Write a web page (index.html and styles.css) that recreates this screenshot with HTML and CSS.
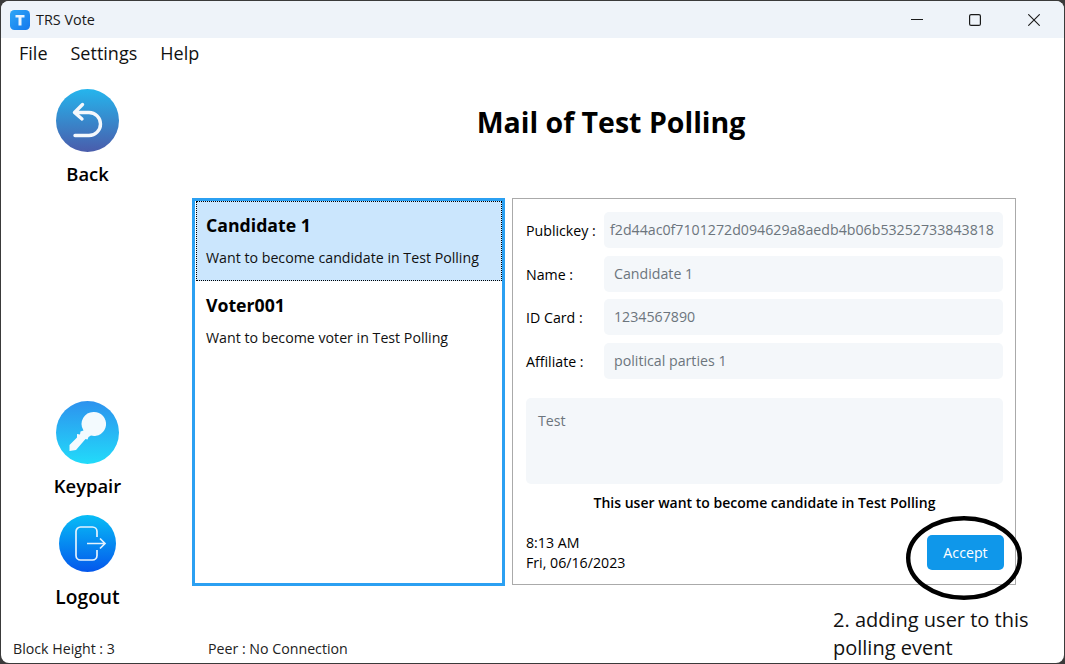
FILE: index.html
```html
<!DOCTYPE html>
<html lang="en">
<head>
<meta charset="utf-8">
<title>TRS Vote</title>
<link rel="stylesheet" href="styles.css">
</head>
<body>
<div class="window">
  <header class="titlebar">
    <div class="app">
      <svg class="app-icon" width="20" height="20" viewBox="0 0 20 20"><defs><linearGradient id="ai" x1="0" y1="0" x2="1" y2="1"><stop offset="0" stop-color="#2ea6f6"/><stop offset="1" stop-color="#1478ee"/></linearGradient></defs><rect width="20" height="20" rx="4.500" fill="url(#ai)"/><path d="M5.500 5h9v2.600h-3V15.500H8.500V7.600h-3z" fill="#eaf4ff"/></svg>
      <span class="app-name">TRS Vote</span>
    </div>
    <div class="controls">
      <svg class="ctl" width="12" height="12" viewBox="0 0 12 12"><path d="M0 5.500h12" stroke="#1a1a1a" stroke-width="1.100" fill="none"/></svg>
      <svg class="ctl" width="12" height="12" viewBox="0 0 12 12"><rect x="0.600" y="0.600" width="10.800" height="10.800" rx="1.500" stroke="#1a1a1a" stroke-width="1.200" fill="none"/></svg>
      <svg class="ctl close" width="12" height="12" viewBox="0 0 12 12"><path d="M0.300 0.300l11.400 11.400M11.700 0.300L0.300 11.700" stroke="#1a1a1a" stroke-width="1.100" fill="none"/></svg>
    </div>
  </header>
  <nav class="menubar">
    <span>File</span>
    <span>Settings</span>
    <span>Help</span>
  </nav>
  <div class="body">
    <aside class="sidebar">
      <div class="side-item back">
        <svg width="63" height="63" viewBox="0 0 63 63"><defs><linearGradient id="bk" x1="0" y1="0" x2="0" y2="1"><stop offset="0" stop-color="#25b5ed"/><stop offset="1" stop-color="#4a5cab"/></linearGradient></defs><circle cx="31.500" cy="31.500" r="31.500" fill="url(#bk)"/><path d="M18.500 23.500H33a11.500 11.500 0 0 1 0 23H19M26.500 15.500l-8 8 7.500 6.500" stroke="#f4f8fc" stroke-width="3.400" stroke-linecap="round" stroke-linejoin="round" fill="none"/></svg>
        <span class="side-label">Back</span>
      </div>
      <div class="side-item keypair">
        <svg width="63" height="63" viewBox="0 0 63 63"><defs><linearGradient id="ky" x1="0" y1="0" x2="0" y2="1"><stop offset="0" stop-color="#2d92ee"/><stop offset="1" stop-color="#22dbfa"/></linearGradient></defs><circle cx="31.500" cy="31.500" r="31.500" fill="url(#ky)"/><path d="M38 11A12 12 0 1 1 35 34.600L32.500 36L31.500 38.500L29.500 38L20 49L13.500 50L13.500 44L21 36.500L21 33L24 33.500L24.500 30.500L27.500 29.500A12 12 0 0 1 38 11z" fill="#f3fafe"/></svg>
        <span class="side-label">Keypair</span>
      </div>
      <div class="side-item logout">
        <svg width="57" height="57" viewBox="0 0 57 57"><defs><linearGradient id="lg" x1="0" y1="0" x2="0" y2="1"><stop offset="0" stop-color="#08bdf6"/><stop offset="1" stop-color="#0457ec"/></linearGradient></defs><circle cx="28.500" cy="28.500" r="28.500" fill="url(#lg)"/><path d="M38 22v-5.500a4.500 4.500 0 0 0-4.500-4.500H21.500a4.500 4.500 0 0 0-4.500 4.500v24a4.500 4.500 0 0 0 4.500 4.500h12a4.500 4.500 0 0 0 4.500-4.500V35" stroke="#e4f2fe" stroke-width="1.700" fill="none"/><path d="M28 28.500h18M41 23.500l5 5-5 5" stroke="#e4f2fe" stroke-width="1.700" fill="none"/></svg>
        <span class="side-label">Logout</span>
      </div>
    </aside>
    <main class="content">
      <h1 class="heading">Mail of Test Polling</h1>
      <div class="panels">
        <section class="list">
          <article class="mail selected">
            <h2 class="mail-name">Candidate 1</h2>
            <p class="mail-text">Want to become candidate in Test Polling</p>
          </article>
          <article class="mail">
            <h2 class="mail-name">Voter001</h2>
            <p class="mail-text">Want to become voter in Test Polling</p>
          </article>
        </section>
        <section class="detail">
          <div class="field"><label>Publickey :</label><div class="input key">f2d44ac0f7101272d094629a8aedb4b06b53252733843818</div></div>
          <div class="field"><label>Name :</label><div class="input">Candidate 1</div></div>
          <div class="field"><label>ID Card :</label><div class="input">1234567890</div></div>
          <div class="field"><label>Affiliate :</label><div class="input">political parties 1</div></div>
          <div class="note">Test</div>
          <p class="summary">This user want to become candidate in Test Polling</p>
          <div class="detail-foot">
            <div class="stamp"><div>8:13 AM</div><div>Fri, 06/16/2023</div></div>
            <button class="accept">Accept</button>
          </div>
        </section>
      </div>
    </main>
  </div>
  <footer class="status">
    <span class="block">Block Height : 3</span>
    <span>Peer : No Connection</span>
  </footer>
  <svg class="ring" width="120" height="88" viewBox="0 0 120 88"><ellipse cx="60" cy="44" rx="55.800" ry="39.800" stroke="#000" stroke-width="4.400" fill="none"/></svg>
  <div class="annotation">2. adding user to this<br>polling event</div>
</div>
</body>
</html>
```
FILE: styles.css
```css
* { box-sizing: border-box; }
html, body { margin: 0; height: 100%; }
body {
  background: #3a3a3a;
  padding: 1px;
  overflow: hidden;
  font-family: "Open Sans", "Noto Sans", sans-serif;
  color: #000;
}
.window {
  position: relative;
  width: 1063px;
  height: 662px;
  background: #fff;
  border-radius: 8px;
  overflow: hidden;
  display: flex;
  flex-direction: column;
}
.titlebar {
  flex: none;
  height: 37px;
  background: #eef3f9;
  display: flex;
  align-items: center;
  justify-content: space-between;
  padding-left: 9px;
}
.app { display: flex; align-items: center; gap: 6px; }
.app-name { font-size: 14.400px; color: #1a1a1a; padding-bottom: 1px; }
.controls { display: flex; align-items: center; gap: 46px; padding-right: 24px; }
.close { margin-left: 1px; }
.menubar {
  flex: none;
  height: 34px;
  display: flex;
  gap: 23px;
  align-items: center;
  padding: 0 0 4px 18px;
  font-size: 18px;
  color: #111;
}
.body { flex: 1; display: flex; min-height: 0; }
.sidebar {
  flex: none;
  width: 173px;
  display: flex;
  flex-direction: column;
  align-items: center;
  padding-top: 17px;
}
.side-item { display: flex; flex-direction: column; align-items: center; }
.side-label { font-size: 18.400px; font-weight: 600; line-height: 24px; margin-top: 10px; }
.keypair { margin-top: auto; }
.logout { margin-top: 17px; margin-bottom: 26px; }
.logout .side-label { margin-top: 13px; font-size: 19.200px; }
.content { flex: 1; padding: 29px 49px 0 18px; display: flex; flex-direction: column; }
.heading {
  margin: 0 0 55px;
  padding-left: 14px;
  text-align: center;
  font-size: 28.500px;
  line-height: 42px;
  font-weight: 700;
}
.panels { flex: 1; display: flex; gap: 7px; min-height: 0; }
.list {
  flex: none;
  width: 313px;
  height: 388px;
  border: 3px solid #2ba0f2;
}
.mail { height: 80px; padding: 12px 9px 0 11px; }
.mail.selected {
  background: #cbe6fd;
  outline: 1px dotted #000;
  outline-offset: -1px;
  margin-left: 1px;
  padding-left: 10px;
}
.mail-name { margin: 0; font-size: 17.700px; line-height: 24px; font-weight: 700; }
.mail-text { margin: 11px 0 0; font-size: 14.200px; line-height: 20px; white-space: nowrap; color: #111; }
.detail {
  flex: none;
  width: 504px;
  height: 387px;
  border: 1px solid #aaa;
  padding: 13px 12px 0 13px;
  font-size: 14.200px;
}
.field { display: flex; align-items: center; height: 36px; margin-bottom: 8px; }
.field:nth-child(2), .field:nth-child(4) { margin-bottom: 7px; }
.field label { flex: none; width: 78px; }
.input {
  flex: 1;
  height: 36px;
  line-height: 36px;
  background: #f4f7fa;
  border-radius: 5px;
  padding-left: 10px;
  color: #6c757d;
  white-space: nowrap;
  overflow: hidden;
}
.input.key { padding-left: 6px; }
.note {
  margin-top: 19px;
  height: 86px;
  background: #f4f7fa;
  border-radius: 5px;
  padding: 13px 12px;
  color: #6c757d;
}
.summary { margin: 9px 0 0; text-align: center; font-weight: 600; font-size: 14px; line-height: 20px; }
.detail-foot { margin-top: 20px; display: flex; justify-content: space-between; align-items: center; }
.stamp { line-height: 20px; }
.accept {
  width: 77px;
  height: 35px;
  margin: -2px -1px 0 0;
  padding: 1px 0 0;
  border: 0;
  background: #0f97ea;
  color: #fff;
  border-radius: 5px;
  font: inherit;
}
.status {
  flex: none;
  height: 28px;
  display: flex;
  align-items: center;
  padding: 0 0 2px 12px;
  font-size: 14.200px;
  color: #222;
}
.block { width: 195px; }
.ring { position: absolute; left: 903px; top: 513px; }
.annotation {
  position: absolute;
  left: 832px;
  top: 605px;
  font-size: 20px;
  line-height: 28px;
  color: #111;
}
```
